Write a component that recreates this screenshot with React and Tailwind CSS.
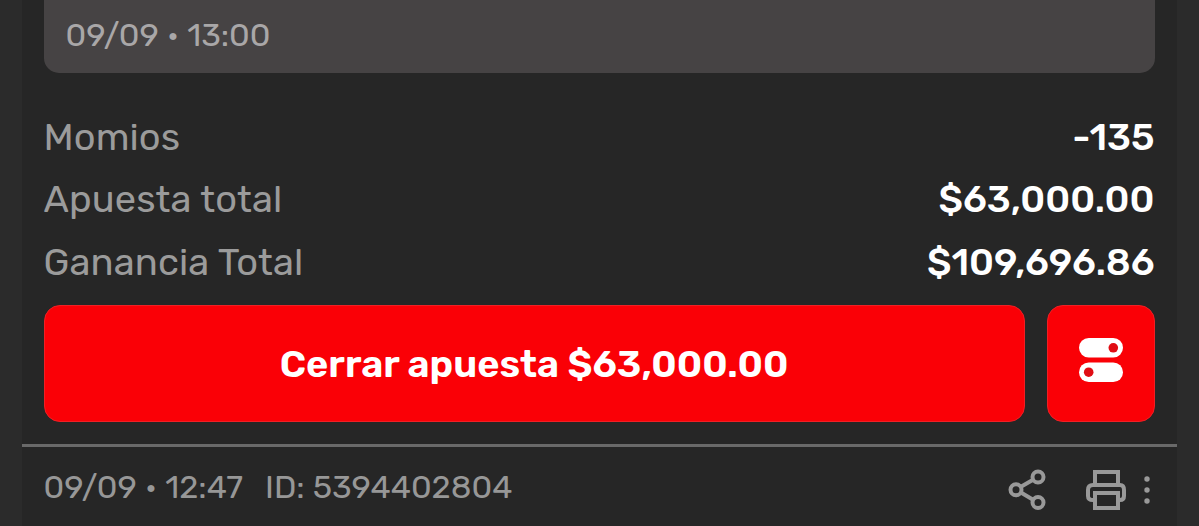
const rows = [
  { label: "Momios", value: "-135" },
  { label: "Apuesta total", value: "$63,000.00" },
  { label: "Ganancia Total", value: "$109,696.86" },
];

export default function App() {
  return (
    <div className="flex h-[526px] w-[1199px] justify-center overflow-hidden bg-[#2b2b2b] pr-px font-['Rubik',Roboto,sans-serif]">
      <div className="flex w-[1155px] flex-col bg-[#262626]">
        <div className="mx-[22px] flex h-[73px] items-center rounded-b-[15px] bg-[#464344] pb-[2px] pl-[22px] text-[32.6px] text-[#a9a7a8]">
          09/09 • 13:00
        </div>

        <div className="mt-[33px] h-[188px] px-[22px]">
          {rows.map((row) => (
            <SummaryRow key={row.label} {...row} />
          ))}
        </div>

        <div className="mx-[22px] mt-[11px] flex h-[117px] gap-[22px]">
          <button className="flex w-[981px] items-center justify-center rounded-[16px] border border-[#f02025] bg-[#fa0006] pt-[3px] text-[38.1px] font-semibold text-white">
            Cerrar apuesta $63,000.00
          </button>
          <button className="flex flex-1 items-center justify-center rounded-[16px] border border-[#f02025] bg-[#fa0006] pb-[8px]">
            <TogglesIcon />
          </button>
        </div>

        <div className="mt-[22px] flex h-[81px] items-center justify-between border-t-[3px] border-[#696969] pl-[22px] pr-[27px]">
          <div className="flex gap-[22px] pt-[2px] text-[32.6px] leading-none text-[#979797]">
            <span>09/09 • 12:47</span>
            <span>ID: 5394402804</span>
          </div>
          <div className="flex items-center pt-[8px]">
            <ShareIcon />
            <PrintIcon />
            <MoreIcon />
          </div>
        </div>
      </div>
    </div>
  );
}

function SummaryRow({ label, value }) {
  return (
    <div className="flex h-[62.6px] items-center justify-between text-[38px]">
      <span className="tracking-[0.1px] text-[#9b9b9b]">{label}</span>
      <span className="font-medium text-white">{value}</span>
    </div>
  );
}

function TogglesIcon() {
  return (
    <svg width="44" height="44" viewBox="0 0 44 44">
      <rect width="44" height="19.5" rx="9.75" fill="#fff" />
      <rect y="24.5" width="44" height="19.5" rx="9.75" fill="#fff" />
      <circle cx="34.3" cy="9.8" r="4.8" fill="#e00d14" />
      <circle cx="9.7" cy="34.2" r="4.8" fill="#e00d14" />
    </svg>
  );
}

function ShareIcon() {
  return (
    <svg width="38" height="42" viewBox="0 0 38 42" fill="none" stroke="#999" strokeWidth="4">
      <circle cx="8" cy="20.7" r="5.5" />
      <circle cx="30" cy="8" r="5.5" />
      <circle cx="30" cy="33.5" r="5.5" />
      <path d="M12.5 18 25.5 10.5M12.5 23.3 25.5 31" />
    </svg>
  );
}

function PrintIcon() {
  return (
    <svg className="ml-[39px]" width="42" height="42" viewBox="0 0 42 42" fill="none" stroke="#999" strokeWidth="4">
      <path d="M10 15V3h23v12" />
      <path d="M10 31H8q-5 0-5-4v-6q0-5 5-5h27q4 0 4 5v6q0 4-4 4h-2" />
      <path d="M10 24h23v15H10z" />
    </svg>
  );
}

function MoreIcon() {
  return (
    <svg className="ml-[17px]" width="6" height="30" viewBox="0 0 6 30" fill="#999">
      <circle cx="3" cy="4" r="2.7" />
      <circle cx="3" cy="15" r="2.7" />
      <circle cx="3" cy="26" r="2.7" />
    </svg>
  );
}
